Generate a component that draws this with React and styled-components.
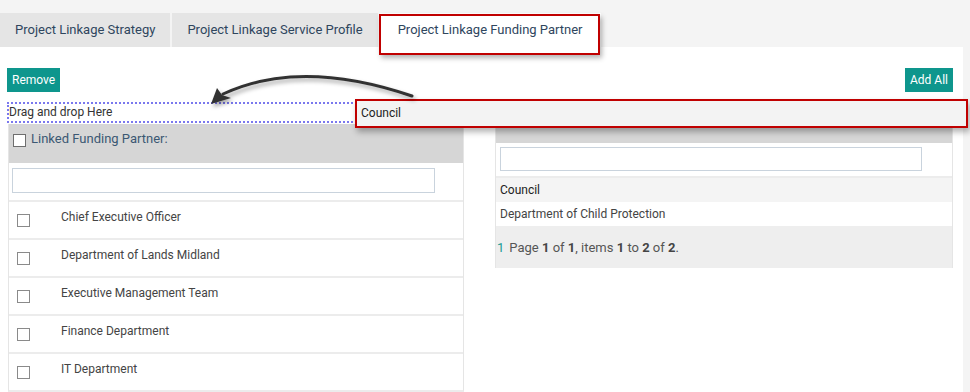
import React from "react";
import styled, { createGlobalStyle } from "styled-components";

const GlobalStyle = createGlobalStyle`
  body {
    margin: 0;
    background: #f4f4f4;
    font-family: Roboto, "Liberation Sans", sans-serif;
  }
  * { box-sizing: border-box; }
`;

const Page = styled.div`
  position: relative;
  width: 970px;
  height: 392px;
  overflow: hidden;
  padding-top: 13px;
  display: flex;
  flex-direction: column;
`;

const TabBar = styled.div`
  flex: none;
  display: flex;
  gap: 2px;
  height: 34px;
`;

const Tab = styled.div`
  position: relative;
  display: flex;
  align-items: center;
  padding: 0 ${({ $active }) => ($active ? "18px" : "15px")} 2px;
  background: ${({ $active }) => ($active ? "#fff" : "#e5e5e5")};
  color: #2f465e;
  font-size: 13px;
  white-space: nowrap;
`;

// red annotation frame drawn over the active tab
const TabHighlight = styled.span`
  position: absolute;
  top: 1px;
  left: -1px;
  right: 1px;
  bottom: -8px;
  border: 2px solid #c00000;
  box-shadow: 2px 3px 5px rgba(0, 0, 0, 0.3);
  pointer-events: none;
`;

const Content = styled.div`
  flex: 1;
  min-height: 0;
  background: #fff;
  margin-right: 7px;
  padding: 21px 10px 0 7px;
`;

const Toolbar = styled.div`
  display: flex;
  justify-content: space-between;
`;

const ActionButton = styled.button`
  height: 24px;
  padding: 0 5px;
  border: none;
  border-radius: 0;
  background: #0e968d;
  color: #fff;
  font-family: inherit;
  font-size: 12px;
`;

const DropZone = styled.div`
  position: relative;
  margin-top: 10px;
  height: 21px;
  border-top: 2px dotted #7a78ee;
  border-bottom: 2px dotted #7a78ee;
  border-left: 2px dotted #7a78ee;
  font-size: 12px;
  line-height: 17px;
  color: #333;
`;

// the dragged item, floating over the drop zone
const DragGhost = styled.div`
  position: absolute;
  left: 346px;
  top: -5px;
  width: 613px;
  height: 29px;
  border: 2px solid #c00000;
  background: #f3f3f3;
  box-shadow: 2px 4px 6px rgba(0, 0, 0, 0.3);
  padding: 4px 0 0 4px;
  font-size: 12px;
  color: #222;
`;

const Panels = styled.div`
  display: flex;
  align-items: flex-start;
  gap: 31px;
  margin-top: 1px;
  padding-left: 1px;
`;

const Panel = styled.div`
  width: ${({ $w }) => $w}px;
  border-left: 1px solid #e5e5e5;
  border-right: 1px solid #e5e5e5;
  border-bottom: ${({ $closed }) => ($closed ? "2px solid #ececec" : "none")};
`;

const PanelHeader = styled.div`
  height: ${({ $h }) => $h}px;
  background: #d6d6d6;
  display: flex;
  align-items: flex-start;
  gap: 5px;
  padding: 10px 4px 0;
`;

const HeaderLabel = styled.span`
  font-size: 13px;
  line-height: 15px;
  margin-top: -3px;
  color: #3b5873;
`;

const Checkbox = styled.span`
  display: inline-block;
  flex: none;
  width: 13px;
  height: 13px;
  background: #fff;
  border: 1px solid ${({ $dark }) => ($dark ? "#6e6e6e" : "#8a8a8a")};
`;

const FilterRow = styled.div`
  padding: ${({ $pad }) => $pad};
`;

const FilterInput = styled.input`
  display: block;
  width: 100%;
  height: ${({ $h }) => $h}px;
  border: 1px solid #c9d3dd;
  outline: none;
  padding: 0 4px;
`;

const ItemRow = styled.div`
  display: flex;
  align-items: center;
  gap: 31px;
  height: 38px;
  padding-left: 8px;
  border-top: 2px solid #ececec;
  font-size: 12px;
  color: #444;

  & > span:last-child {
    margin-bottom: 6px;
  }
`;

const GridRow = styled.div`
  display: flex;
  align-items: center;
  padding-left: 4px;
  font-size: 12px;
  color: ${({ $alt }) => ($alt ? "#222" : "#444")};
  background: ${({ $alt }) => ($alt ? "#f4f4f4" : "#fff")};
  border-top: ${({ $first }) => ($first ? "2px solid #ececec" : "none")};
  height: ${({ $first }) => ($first ? "26px" : "24px")};
`;

const Pager = styled.div`
  height: 42px;
  display: flex;
  align-items: center;
  background: #eeeeee;
  font-size: 13px;
  color: #555;
  padding-left: 1px;

  b {
    color: #444;
  }
`;

const PageNum = styled.span`
  color: #1a9a94;
  margin-right: 5px;
`;

const ArrowLayer = styled.svg`
  position: absolute;
  top: 0;
  left: 0;
  width: 970px;
  height: 392px;
  pointer-events: none;
  overflow: visible;
`;

const partners = [
  "Chief Executive Officer",
  "Department of Lands Midland",
  "Executive Management Team",
  "Finance Department",
  "IT Department",
];

function App() {
  return (
    <Page>
      <GlobalStyle />
      <TabBar>
        <Tab>Project Linkage Strategy</Tab>
        <Tab>Project Linkage Service Profile</Tab>
        <Tab $active>
          Project Linkage Funding Partner
          <TabHighlight />
        </Tab>
      </TabBar>
      <Content>
        <Toolbar>
          <ActionButton>Remove</ActionButton>
          <ActionButton>Add All</ActionButton>
        </Toolbar>
        <DropZone>
          Drag and drop Here
          <DragGhost>Council</DragGhost>
        </DropZone>
        <Panels>
          <Panel $w={456} $closed>
            <PanelHeader $h={39}>
              <Checkbox $dark />
              <HeaderLabel>Linked Funding Partner:</HeaderLabel>
            </PanelHeader>
            <FilterRow $pad="5px 28px 7px 3px">
              <FilterInput $h={25} />
            </FilterRow>
            {partners.map((name) => (
              <ItemRow key={name}>
                <Checkbox />
                <span>{name}</span>
              </ItemRow>
            ))}
          </Panel>
          <Panel $w={458}>
            <PanelHeader $h={19} />
            <FilterRow $pad="4px 30px 5px 4px">
              <FilterInput $h={24} />
            </FilterRow>
            <GridRow $alt $first>Council</GridRow>
            <GridRow>Department of Child Protection</GridRow>
            <Pager>
              <PageNum>1</PageNum>
              <span>
                Page <b>1</b> of <b>1</b>, items <b>1</b> to <b>2</b> of <b>2</b>.
              </span>
            </Pager>
          </Panel>
        </Panels>
      </Content>
      <ArrowLayer viewBox="0 0 970 392">
        <defs>
          <filter id="arrowShadow" x="-10%" y="-50%" width="120%" height="200%">
            <feDropShadow dx="2" dy="3" stdDeviation="2" floodColor="#000" floodOpacity="0.35" />
          </filter>
        </defs>
        <g filter="url(#arrowShadow)">
          <path d="M412 96 Q300 58 223 94" fill="none" stroke="#333" strokeWidth="3" strokeLinecap="round" />
          <path d="M211 104 L217 88 L222 95 L231 98 Z" fill="#333" />
        </g>
      </ArrowLayer>
    </Page>
  );
}

export default App;
